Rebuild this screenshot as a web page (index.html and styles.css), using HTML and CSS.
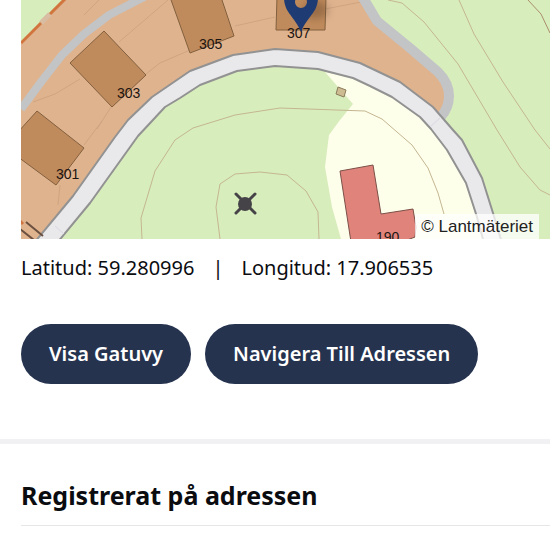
FILE: index.html
```html
<!DOCTYPE html>
<html lang="sv">
<head>
    <meta charset="UTF-8">
    <meta name="viewport" content="width=device-width, initial-scale=1.0">
    <title>Registrerat på adressen</title>
    <link rel="stylesheet" href="styles.css">
</head>
<body>
    <section class="location">
        <div class="map">
            <svg class="map-canvas" viewBox="21 0 529 239" preserveAspectRatio="xMinYMin slice" role="img" aria-label="Karta">
                <rect class="grass" x="21" y="0" width="529" height="239"/>

                <!-- tomtmark -->
                <path class="plot" d="M21 43L64 0H366L377 21L410 48L438 72L449 88L449 106L442 116L400 84L318 54L275 51L233 57L190 73L152 99L122 131L73 198L38 239H21Z"/>
                <path class="garden" d="M325 72L353 104L340 120L329 135L325 167L332 207L341 239H483L466 183L447 150L420 117L392 97L353 78Z"/>

                <!-- höjdkurvor -->
                <path class="contour" d="M142 239L141 218L155 171L175 140L193 128L235 115L280 108L365 111L382 119L412 145L428 168L438 193L444 214"/>
                <path class="contour" d="M220 239L216 207L220 184L235 174L260 172L287 175L306 191L318 212L319 239"/>
                <path class="contour" d="M388 0L402 3L424 22L458 64L497 130L520 167L540 190L550 195"/>
                <path class="contour" d="M459 0L474 34L503 82L535 130L550 149"/>
                <path class="contour dark" d="M528 0L541 14L550 33"/>
                <path class="contour faint" d="M33 102L55 94L80 79M146 74L160 63L190 50M235 26L275 17M325 9L361 2M119 42L168 0M111 107L97 129M102 121L84 145M60 185L58 205M84 15L99 0"/>

                <!-- gångväg -->
                <path class="path narrow" d="M21 109L41 82L62 55L84 34L109 15L146 -4"/>
                <path class="path" d="M362 -4L377 21L410 48L438 72Q449 83 449 96Q449 108 440 118"/>
                <path class="fence" d="M21 43L67 -3"/>
                <path class="fence-gap" d="M41 23L50 14"/>

                <!-- gata -->
                <path class="road" d="M34 243L73 196L115 137L128 120L152 97L190 71L233 55L275 49L318 52L360 63L400 82L433 107L453 130L462 140L482 178L493 213L502 243L484 243L477 217L466 183L447 150L431 129L420 117L392 97L370 86L353 78L318 69L275 66L237 71L200 85L180 98L165 107L152 121L138 136L90 203L57 243Z"/>
                <path class="road-seam" d="M55 226L64 234M430 127L441 117"/>

                <!-- byggnader -->
                <path class="house" d="M104 31L146 75L112 107L70 63Z"/>
                <path class="house" d="M18 132L37 111L84 148L56 185L18 157Z"/>
                <path class="house" d="M170 -3L190 53L234 36L221 -3Z"/>
                <path class="house" d="M277 -3L276 30L325 30L326 -3Z"/>
                <path class="school" d="M340 171L373 165L381 214L413 209L416 227L415 237L402 242H351Z"/>
                <path class="shed" d="M338 87L346 90L344 97L336 94Z"/>
                <path class="steps" d="M26 222L43 236M20 229L34 240"/>
                <path class="fence" d="M20 221L23 224"/>

                <text class="number" x="56" y="179">301</text>
                <text class="number" x="117" y="98">303</text>
                <text class="number" x="199" y="49">305</text>
                <text class="number" x="287" y="38">307</text>
                <text class="number" x="376" y="242">190</text>

                <path class="tower-legs" d="M236 194L255 213M255 194L236 213"/>
                <circle class="tower" cx="245" cy="204" r="7"/>

                <ellipse class="pin-shadow" cx="315" cy="10" rx="13" ry="9"/>
                <path class="pin" fill-rule="evenodd" d="M284 -3C284 13 294 15 301 32C308 15 318 13 318 -3ZM295 2A6 6 0 0 0 307 2A6 6 0 0 0 295 2Z"/>
            </svg>
            <span class="credit">© Lantmäteriet</span>
        </div>

        <div class="coordinates">
            <span>Latitud: 59.280996</span>
            <span>|</span>
            <span>Longitud: 17.906535</span>
        </div>

        <div class="actions">
            <button type="button">Visa Gatuvy</button>
            <button type="button">Navigera Till Adressen</button>
        </div>
    </section>

    <section class="registered">
        <h2>Registrerat på adressen</h2>
    </section>
</body>
</html>
```

FILE: styles.css
```css
body {
    margin: 0;
    background-color: #fff;
    color: #0b0c10;
    font-family: 'Trebuchet MS', 'Noto Sans', sans-serif;
}

.location {
    padding: 0 0 55px 21px;
    border-bottom: 5px solid #f1f1f3;
}

.map {
    position: relative;
    overflow: hidden;
}

.map-canvas {
    display: block;
    width: 100%;
    height: 239px;
}

.grass {
    fill: #d8edbc;
}

.plot {
    fill: #dfb38e;
}

.garden {
    fill: #feffeb;
}

.contour {
    fill: none;
    stroke: #c4b692;
    stroke-width: 1;
}

.contour.dark {
    stroke: #a98f6b;
}

.contour.faint {
    stroke: #cfa581;
}

.path {
    fill: none;
    stroke: #c3c4c6;
    stroke-width: 10;
    stroke-linejoin: round;
}

.path.narrow {
    stroke-width: 8;
}

.fence {
    fill: none;
    stroke: #d2743d;
    stroke-width: 3;
}

.fence-gap {
    stroke: #d9bda3;
    stroke-width: 5;
}

.road {
    fill: #e9e9ec;
    stroke: #929292;
    stroke-width: 2;
    stroke-linejoin: round;
}

.road-seam {
    stroke: #d8d8e0;
}

.house {
    fill: #c08b5c;
    stroke: #82603f;
    stroke-width: 1;
}

.school {
    fill: #df837b;
    stroke: #7c5048;
    stroke-width: 1;
}

.shed {
    fill: #cdbb91;
    stroke: #8b7a5c;
}

.steps {
    stroke: #6b5040;
    stroke-width: 2;
}

.number {
    fill: #1c1512;
    font-family: 'Liberation Sans', Arial, sans-serif;
    font-size: 14px;
}

.tower {
    fill: #454347;
}

.tower-legs {
    stroke: #454347;
    stroke-width: 3;
    stroke-linecap: round;
}

.pin {
    fill: #1f3b73;
}

.pin-shadow {
    fill: #5d4029;
    opacity: 0.4;
    filter: blur(4px);
}

.credit {
    position: absolute;
    right: 11px;
    bottom: 0;
    padding: 0 6px;
    background-color: rgba(255, 255, 255, 0.75);
    color: #222;
    font-family: 'Liberation Sans', Arial, sans-serif;
    font-size: 17px;
    line-height: 25px;
}

.coordinates {
    display: flex;
    gap: 18px;
    margin-top: 14px;
    font-size: 20px;
    line-height: 30px;
}

.actions {
    display: flex;
    flex-wrap: wrap;
    gap: 14px;
    margin-top: 41px;
}

.actions button {
    padding: 0 28px;
    border: none;
    border-radius: 30px;
    background-color: #26334f;
    color: #fff;
    font-family: inherit;
    font-size: 20px;
    font-weight: 600;
    line-height: 60px;
    cursor: pointer;
}

.actions button:hover {
    background-color: #1b2640;
}

.registered {
    padding: 32px 0 24px 21px;
}

.registered h2 {
    margin: 0;
    padding-bottom: 11px;
    border-bottom: 1px solid #e6e6e8;
    font-size: 25px;
    font-weight: 700;
    line-height: 38px;
}
```
